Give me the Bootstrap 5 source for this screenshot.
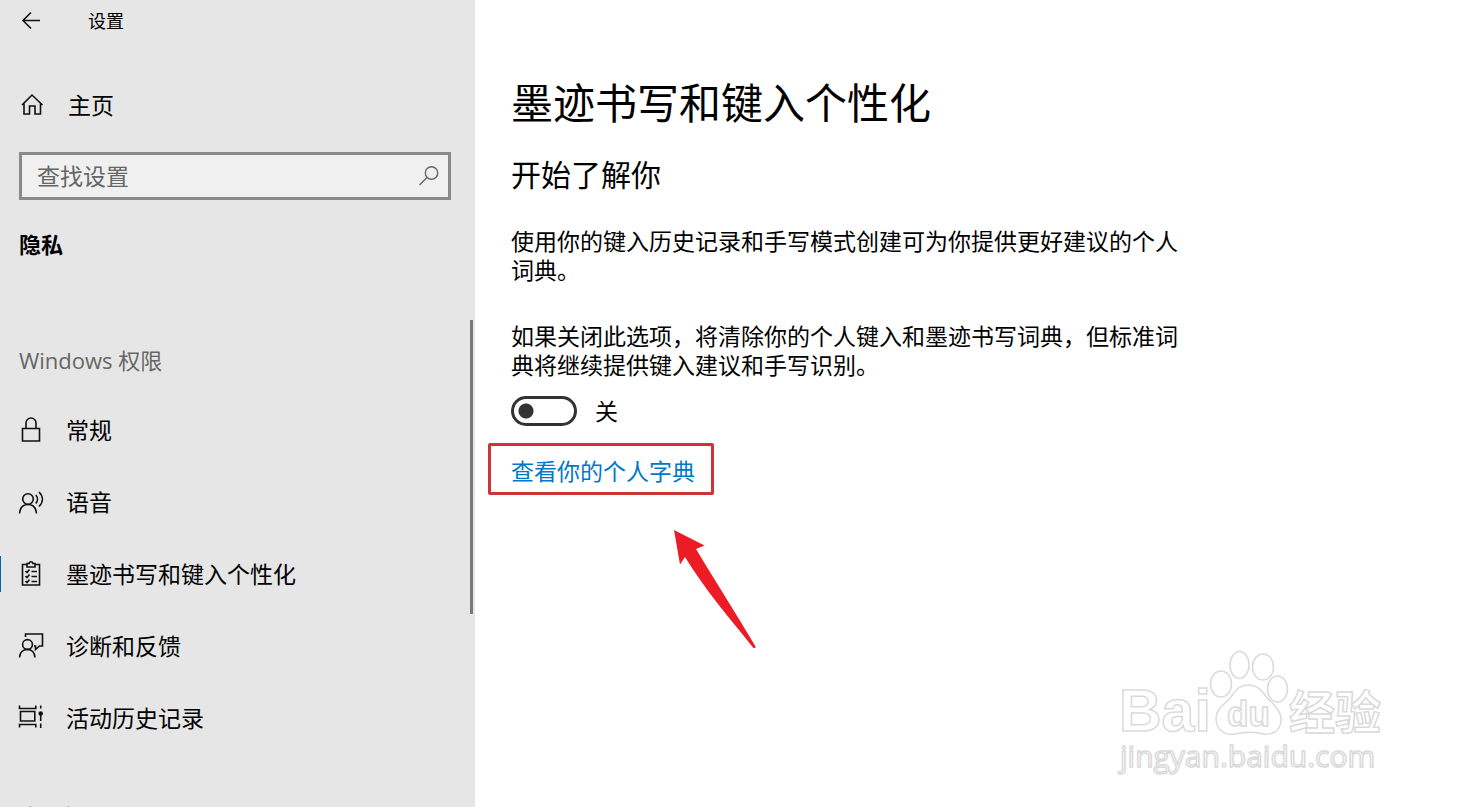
<!DOCTYPE html>
<html lang="zh-CN">
<head>
<meta charset="utf-8">
<meta name="viewport" content="width=device-width, initial-scale=1">
<title>设置</title>
<link href="https://cdn.jsdelivr.net/npm/bootstrap@5.3.0/dist/css/bootstrap.min.css" rel="stylesheet">
<style>
body { font-family: "Open Sans", "Noto Sans CJK SC", sans-serif; font-size: 23px; line-height: 29px; color: #000; background: #fff; }
svg { fill: none; stroke: #111; stroke-width: 1.6; }
.side-pane { flex: 0 0 475px; background: #e6e6e6; }
.title-bar { height: 42px; font-size: 18px; padding-left: 17px; gap: 43px; }
.nav-row { height: 72px; padding-left: 17px; gap: 21px; color: #000; text-decoration: none; }
.home-row { height: 46px; margin-top: 40px; gap: 23px; }
.icon-box { width: 28px; height: 28px; flex: none; }
.search-wrap { margin: 24px 24px 0 19px; }
.search-box { height: 48px; border: 3px solid #8a8a8a; border-radius: 0; background: #f0f0f0; font-size: 23px; padding: 0 48px 0 15px; }
.search-box::placeholder { color: #666; }
.search-icon { right: 10px; top: 12px; width: 24px; height: 24px; stroke: #666; stroke-width: 1.4; }
.section-name { font-size: 22px; margin: 31px 0 0 19px; }
.scroll-area { margin-top: 63px; padding-top: 6px; }
.group-name { height: 68px; padding-left: 19px; color: #666; font-size: 22px; }
.next-group { margin-top: 28px; }
.thumb { right: 2px; top: 0; width: 3px; height: 294px; background: #7a7a7a; }
.active-mark { left: 0; top: 18px; width: 1px; height: 36px; background: #0067b0; }
.main-pane { padding: 73px 24px 24px 13px; min-width: 0; }
.text-inset { padding-left: 23px; }
.page-name { font-size: 42px; line-height: 60px; }
.sub-name { font-size: 30px; line-height: 40px; margin-top: 22px; }
.copy { max-width: 692px; margin: 32px 0 37px; }
.switch-row { margin-top: -21px; gap: 18px; }
.toggle { appearance: none; width: 66px; height: 30px; margin: 0; border: 3px solid #333; border-radius: 15px; background: radial-gradient(circle at 12px 12px, #333 7px, transparent 8px); }
.toggle:checked { background: radial-gradient(circle at 48px 12px, #333 7px, transparent 8px); }
.link-frame { margin-top: 17px; height: 52px; width: fit-content; border: 3px solid #cb3438; border-radius: 2px; padding: 4px 16px 0 20px; }
.link-frame a { color: #0078c8; text-decoration: none; }
.pointer { margin: 33px 0 0 184px; width: 86px; height: 122px; }
.watermark { right: 72px; bottom: 20px; width: 276px; height: 142px; }
.watermark text { font-family: "Liberation Sans", "Noto Sans CJK SC", sans-serif; }
.watermark .site-name { font-family: "Open Sans", sans-serif; }
</style>
</head>
<body>
<div class="d-flex vh-100 overflow-hidden">
  <aside class="side-pane d-flex flex-column overflow-hidden">
    <header class="title-bar d-flex align-items-center flex-shrink-0">
      <button class="btn p-0 border-0 d-flex icon-box" aria-label="返回">
        <svg width="28" height="28" viewBox="0 0 28 28"><path d="M6 13.500H23M14 5.500L6 13.500L14 21.500"/></svg>
      </button>
      <span>设置</span>
    </header>
    <a href="#" class="nav-row home-row d-flex align-items-center flex-shrink-0">
      <svg class="icon-box" viewBox="0 0 28 28"><path d="M5 14L15 4L25.500 14M7 12.500V23H12.500V15H18V23H23.500V12.500"/></svg>
      <span>主页</span>
    </a>
    <div class="search-wrap position-relative">
      <input class="form-control search-box" type="search" placeholder="查找设置" aria-label="查找设置">
      <svg class="search-icon position-absolute" viewBox="0 0 24 24"><circle cx="14.500" cy="9" r="6.200"/><path d="M10 13.500L2.500 21"/></svg>
    </div>
    <h2 class="section-name fw-bold">隐私</h2>
    <nav class="scroll-area position-relative d-flex flex-column">
      <div class="group-name d-flex align-items-center flex-shrink-0">Windows 权限</div>
      <a href="#" class="nav-row d-flex align-items-center flex-shrink-0">
        <svg class="icon-box" viewBox="0 0 28 28"><path d="M5.500 12.500H22.500V25H5.500ZM9 12.500V7a5 5 0 0 1 10 0V12.500"/></svg>
        <span>常规</span>
      </a>
      <a href="#" class="nav-row d-flex align-items-center flex-shrink-0">
        <svg class="icon-box" viewBox="0 0 28 28"><circle cx="11" cy="11" r="5.300"/><path d="M2.500 25.500C3 19.500 6.500 16.500 11 16.500S19 19.500 19.500 25.500M18.800 7C21 9.500 21 13 18.800 15.500M22 4C26.500 8.500 26.500 14 22 18.500"/></svg>
        <span>语音</span>
      </a>
      <a href="#" class="nav-row position-relative d-flex align-items-center flex-shrink-0" aria-current="page">
        <span class="active-mark position-absolute"></span>
        <svg class="icon-box" viewBox="0 0 28 28"><path d="M10 4.500H5.500V25H22.500V4.500H18M10 3.500H12.200C12.200 1.200 15.800 1.200 15.800 3.500H18V7H10ZM14.500 11.500H20M14.500 16.500H20M14.500 21.500H20M8.500 11L10 12.500L12.500 9.500M8.500 16L10 17.500L12.500 14.500M8.500 21L10 22.500L12.500 19.500"/></svg>
        <span>墨迹书写和键入个性化</span>
      </a>
      <a href="#" class="nav-row d-flex align-items-center flex-shrink-0">
        <svg class="icon-box" viewBox="0 0 28 28"><circle cx="10.500" cy="12.500" r="4.900"/><path d="M2.500 25.500C3 20 6 17.500 10.500 17.500S17.500 20 18 25.500M8.500 5V2H25.500V14H22.500L18.500 17.500V14H17"/></svg>
        <span>诊断和反馈</span>
      </a>
      <a href="#" class="nav-row d-flex align-items-center flex-shrink-0">
        <svg class="icon-box" viewBox="0 0 28 28"><path d="M2.500 1.500V4.500H18.800V1.500M3.500 7.500H17.800V17H3.500ZM2.500 23.500V20.500H18.800V23.500M23.700 1.500V4.500M23.700 8V17M23.700 19.500V24"/><circle cx="23.700" cy="9.500" r="1.500" fill="#111"/></svg>
        <span>活动历史记录</span>
      </a>
      <div class="group-name next-group d-flex align-items-center flex-shrink-0">应用权限</div>
      <span class="thumb position-absolute"></span>
    </nav>
  </aside>
  <main class="main-pane flex-grow-1 position-relative">
    <h1 class="page-name text-inset fw-normal mb-0">墨迹书写和键入个性化</h1>
    <h2 class="sub-name text-inset fw-normal mb-0">开始了解你</h2>
    <p class="copy text-inset">使用你的键入历史记录和手写模式创建可为你提供更好建议的个人词典。</p>
    <p class="copy text-inset">如果关闭此选项，将清除你的个人键入和墨迹书写词典，但标准词典将继续提供键入建议和手写识别。</p>
    <div class="switch-row text-inset d-flex align-items-center">
      <input class="toggle" type="checkbox" role="switch" id="personal">
      <label for="personal">关</label>
    </div>
    <div class="link-frame d-flex align-items-center"><a href="#">查看你的个人字典</a></div>
    <svg class="pointer d-block" viewBox="0 0 86 122"><path fill="#eb1c24" stroke="none" d="M2 2L32.500 17.500L24 21C42 51 65 87 83.500 118.500Q83.500 121 81 119.500C60 93 33 62 13 29L8 36.500Z"/></svg>
    <svg class="watermark position-absolute" viewBox="0 0 276 142" role="img" aria-label="Baidu 经验">
      <g style="fill:#fff;stroke:#dadada;stroke-width:1.5">
        <text x="6" y="86" font-size="59" font-weight="bold">Bai</text>
        <ellipse cx="108" cy="39" rx="10.500" ry="13"/>
        <ellipse cx="126.500" cy="20" rx="9.500" ry="13.500"/>
        <ellipse cx="150" cy="22" rx="10.500" ry="13"/>
        <ellipse cx="164.500" cy="44" rx="10" ry="13"/>
        <path d="M135 40C147 40 150 48 155 54C162 60 169 67 168 76C167 87 158 90 151 89C140 86 131 87 122 89C110 91 103 83 103 73C103 64 112 59 118 52C122 46 126 40 135 40Z"/>
        <text x="114" y="81" font-size="35" font-weight="bold">du</text>
        <text x="176" y="84" font-size="46" font-weight="bold">经验</text>
        <text class="site-name" x="7" y="122" font-size="30">jingyan.baidu.com</text>
      </g>
    </svg>
  </main>
</div>
<script src="https://cdn.jsdelivr.net/npm/bootstrap@5.3.0/dist/js/bootstrap.bundle.min.js"></script>
</body>
</html>
